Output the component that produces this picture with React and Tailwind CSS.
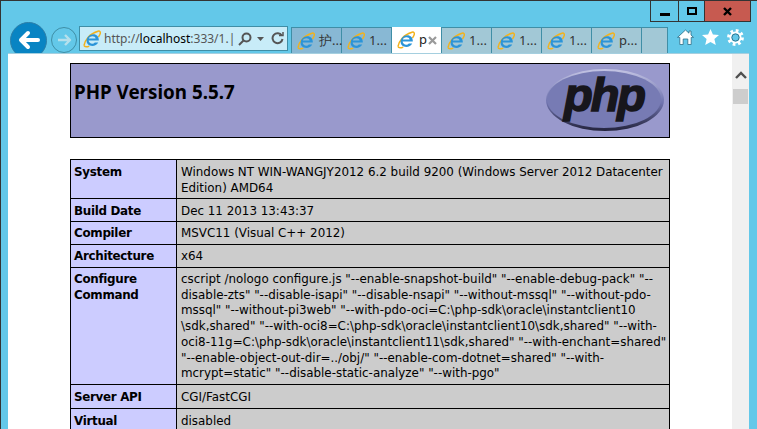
import React from 'react';

const tabs = [
  { label: '护...', tone: 'bg-[#88b8d4]' },
  { label: '1...', tone: 'bg-[#88b8d4]' },
  { label: 'p', active: true },
  { label: '1...', tone: 'bg-[#a2c8d6]' },
  { label: '1...', tone: 'bg-[#a2c8d6]' },
  { label: '1...', tone: 'bg-[#a2c8d6]' },
  { label: 'p...', tone: 'bg-[#a2c8d6]' },
];

const loose = 'pt-[4px] pb-[2px]';
const tight = 'pt-[3px] pb-[3px]';

const rows = [
  { name: ['System'], pad: loose, lines: ['Windows NT WIN-WANGJY2012 6.2 build 9200 (Windows Server 2012 Datacenter', 'Edition) AMD64'] },
  { name: ['Build Date'], pad: loose, lines: ['Dec 11 2013 13:43:37'] },
  { name: ['Compiler'], pad: tight, lines: ['MSVC11 (Visual C++ 2012)'] },
  { name: ['Architecture'], pad: tight, lines: ['x64'] },
  {
    name: ['Configure', 'Command'],
    pad: 'pt-[4px] pb-[2px] leading-[15.7px]',
    lines: [
      'cscript /nologo configure.js "--enable-snapshot-build" "--enable-debug-pack" "--',
      'disable-zts" "--disable-isapi" "--disable-nsapi" "--without-mssql" "--without-pdo-',
      'mssql" "--without-pi3web" "--with-pdo-oci=C:\\php-sdk\\oracle\\instantclient10',
      '\\sdk,shared" "--with-oci8=C:\\php-sdk\\oracle\\instantclient10\\sdk,shared" "--with-',
      'oci8-11g=C:\\php-sdk\\oracle\\instantclient11\\sdk,shared" "--with-enchant=shared"',
      '"--enable-object-out-dir=../obj/" "--enable-com-dotnet=shared" "--with-',
      'mcrypt=static" "--disable-static-analyze" "--with-pgo"',
    ],
  },
  { name: ['Server API'], pad: 'pt-[4px] pb-[3px]', lines: ['CGI/FastCGI'] },
  { name: ['Virtual'], pad: loose, lines: ['disabled'] },
];

const IeIcon = ({ size = 18 }) => (
  <svg width={size} height={size} viewBox="0 0 18 18" className="shrink-0">
    <path d="M1 15.5C2 10 6.5 3.5 15 1.2c2-.5 2.6.8 2.2 2.4-.3 1.2-1 2.4-1.8 3.4" fill="none" stroke="#f2b21c" strokeWidth="1.5" />
    <path d="M1 15.5c.6 1.8 3.2 1.6 5.2.6" fill="none" stroke="#f2b21c" strokeWidth="1.5" />
    <path d="M5.6 10.6h10.2c.3-4-2.2-6.4-5.4-6.4-3.8 0-6.8 3-6.8 6.6 0 3.2 2.4 5.2 5.6 5.2 2.8 0 4.8-1.2 6-3.4h-3.4c-.6.8-1.5 1.2-2.5 1.2-1.9 0-3.5-1.2-3.7-3.2zM5.8 8.4c.4-1.4 2-2.2 3.6-2.2 1.8 0 3 .9 3.2 2.2H5.8z" fill="#2b94d8" fillRule="evenodd" />
  </svg>
);

const PhpLogo = () => (
  <svg width="120" height="64" viewBox="0 0 120 64">
    <defs>
      <linearGradient id="rim" x1="0" y1="0" x2="0" y2="1">
        <stop offset="0" stopColor="#c4c5e4" />
        <stop offset="0.55" stopColor="#6f73ae" />
        <stop offset="1" stopColor="#23233c" />
      </linearGradient>
    </defs>
    <ellipse cx="60" cy="32" rx="59" ry="31" fill="url(#rim)" />
    <ellipse cx="59" cy="31.5" rx="57" ry="28.5" fill="#777bb4" />
    <text x="59" y="43" textAnchor="middle" fontFamily="'Liberation Sans', sans-serif" fontWeight="700" fontStyle="italic" fontSize="47" letterSpacing="-2" fill="#17161c" stroke="#17161c" strokeWidth="1.6">php</text>
  </svg>
);

const Tab = ({ tab }) => (
  <div className={`w-[50px] h-full flex items-center gap-[4px] pl-[5px] border-r border-[#3f8ea6] text-[13px] ${tab.active ? 'bg-white text-[#222]' : `${tab.tone} border-t text-[#333]`}`}>
    <IeIcon />
    <span className="whitespace-nowrap">{tab.label}</span>
    {tab.active && (
      <svg width="9" height="9" viewBox="0 0 9 9" stroke="#9a9a9a" strokeWidth="2.2" className="ml-[-3px] shrink-0">
        <path d="M1 1l7 7M8 1L1 8" />
      </svg>
    )}
  </div>
);

const App = () => {
  return (
    <div className="relative h-screen overflow-hidden bg-[#63c8e9] border-t border-l border-[#333] font-['DejaVu_Sans','Noto_Sans',sans-serif]">
      {/* window buttons */}
      <div className="absolute top-0 left-[649px] flex h-[21px] border-b border-l border-r border-[#333]">
        <div className="w-[28px] flex items-center justify-center border-r border-[#333]">
          <div className="w-[10px] h-[3px] bg-black mt-[6px]" />
        </div>
        <div className="w-[26px] flex items-center justify-center border-r border-[#333]">
          <div className="w-[10px] h-[8px] border-2 border-black" />
        </div>
        <div className="w-[45px] flex items-center justify-center bg-[#c75a50]">
          <svg width="9" height="9" viewBox="0 0 9 9" stroke="black" strokeWidth="2.4"><path d="M1 1l7 7M8 1L1 8" /></svg>
        </div>
      </div>

      {/* toolbar */}
      <div className="flex h-[52px] items-end pl-[9px] font-['Noto_Sans',sans-serif]">
        <div className="flex items-center self-end h-[38px] mb-[-6px]">
          <div className="w-[37px] h-[37px] rounded-full bg-[#0884c3] border border-[#2d7fa8] flex items-center justify-center">
            <svg width="22" height="20" viewBox="0 0 22 20" fill="none" stroke="white" strokeWidth="4" strokeLinecap="round" strokeLinejoin="round">
              <path d="M10 3l-7 7 7 7M3 10h17" />
            </svg>
          </div>
          <div className="ml-[4px] w-[26px] h-[26px] rounded-full border border-[#3f8ea6] flex items-center justify-center">
            <svg width="16" height="14" viewBox="0 0 16 14" fill="none" stroke="#b5e0ec" strokeWidth="2.4" strokeLinejoin="round">
              <path d="M9 2l5 5-5 5M14 7H2" />
            </svg>
          </div>
        </div>
        <div className="ml-[2px] mb-[2px] w-[209px] h-[25px] shrink-0 bg-[#c8ecf8] border border-[#3f8ea6] flex items-center pl-[3px] text-[12px] text-[#555]">
          <IeIcon />
          <span className="ml-[3px] whitespace-nowrap w-[133px]">http://<span className="text-black">localhost</span>:333/1.|</span>
          <svg width="14" height="14" viewBox="0 0 14 14" fill="none" stroke="#555" strokeWidth="2" className="ml-[1px] shrink-0">
            <circle cx="8.5" cy="5.5" r="4" />
            <path d="M5.5 8.5L1 13" />
          </svg>
          <svg width="7" height="4" viewBox="0 0 7 4" className="ml-[5px] shrink-0"><path d="M0 0h7L3.5 4z" fill="#555" /></svg>
          <svg width="13" height="13" viewBox="0 0 13 13" fill="none" stroke="#555" strokeWidth="2" className="ml-[7px] shrink-0">
            <path d="M10.8 3.5A5 5 0 1 0 11.5 7" />
            <path d="M8 3.5h4V0" strokeWidth="1.5" />
          </svg>
        </div>
        <div className="ml-[3px] flex h-[26px] border-l border-[#3f8ea6]">
          {tabs.map((tab, i) => <Tab key={i} tab={tab} />)}
          <div className="w-[26px] bg-[#a2c8d6] border-t border-r border-[#3f8ea6]" />
        </div>
        <div className="ml-[9px] mb-[6px] flex items-center gap-[8px] h-[20px]">
          <svg width="17" height="16" viewBox="0 0 17 16" fill="white" stroke="#2c6f88" strokeWidth="0.8">
            <path d="M8.5 1L12 4.2V2h2v4l2.5 2.4h-2.3V15.5h-3.4V10H6.2v5.5H2.8V8.4H.5z" />
          </svg>
          <svg width="17" height="16" viewBox="0 0 17 16" fill="white">
            <path d="M8.5 0l2.4 5.6 6.1.5-4.6 4 1.4 5.9-5.3-3.1L3.2 16l1.4-5.9L0 6.1l6.1-.5z" />
          </svg>
          <svg width="17" height="17" viewBox="0 0 17 17" fill="none">
            <circle cx="8.5" cy="8.5" r="6.7" stroke="white" strokeWidth="3.4" strokeDasharray="2.6 2.67" />
            <circle cx="8.5" cy="8.5" r="5" stroke="white" strokeWidth="2" />
            <circle cx="8.5" cy="8.5" r="3.6" stroke="#2c6f88" strokeWidth="0.9" />
          </svg>
        </div>
      </div>

      {/* page + scrollbar */}
      <div className="relative ml-[7px] w-[741px] h-[376px] flex border-t border-[#a5cfdf]">
        <div className="w-[724px] bg-white overflow-hidden text-[11.9px] leading-[16px] text-black">
          <div className="w-[600px] h-[75px] mx-auto mt-[9px] flex justify-between bg-[#9999cc] border border-black">
            <h1 className="mt-[13px] ml-[3px] font-['Noto_Sans',sans-serif] text-[18.8px] leading-[30px] font-bold">PHP Version 5.5.7</h1>
            <div className="mt-[4px] mr-[4px]"><PhpLogo /></div>
          </div>
          <table className="w-[600px] mx-auto mt-[21px] border-collapse table-fixed">
            <tbody>
              {rows.map((row, i) => (
                <tr key={i} className="align-top">
                  <td className={`w-[106px] bg-[#ccccff] border border-black pl-[3px] font-bold tracking-[-0.3px] whitespace-nowrap ${row.pad}`}>
                    {row.name.map((l) => <div key={l}>{l}</div>)}
                  </td>
                  <td className={`bg-[#cccccc] border border-black pl-[4px] whitespace-nowrap ${row.pad}`}>
                    {row.lines.map((l) => <div key={l}>{l}</div>)}
                  </td>
                </tr>
              ))}
            </tbody>
          </table>
        </div>
        <div className="w-[17px] bg-[#f0f0f0] flex flex-col items-center">
          <svg width="12" height="8" viewBox="0 0 12 8" fill="none" stroke="#505050" strokeWidth="2.4" className="mt-[17px]">
            <path d="M1 7l5-5 5 5" />
          </svg>
          <div className="w-[15px] h-[15px] bg-[#cdcdcd] mt-[10px]" />
        </div>
      </div>
    </div>
  );
};

export default App;
